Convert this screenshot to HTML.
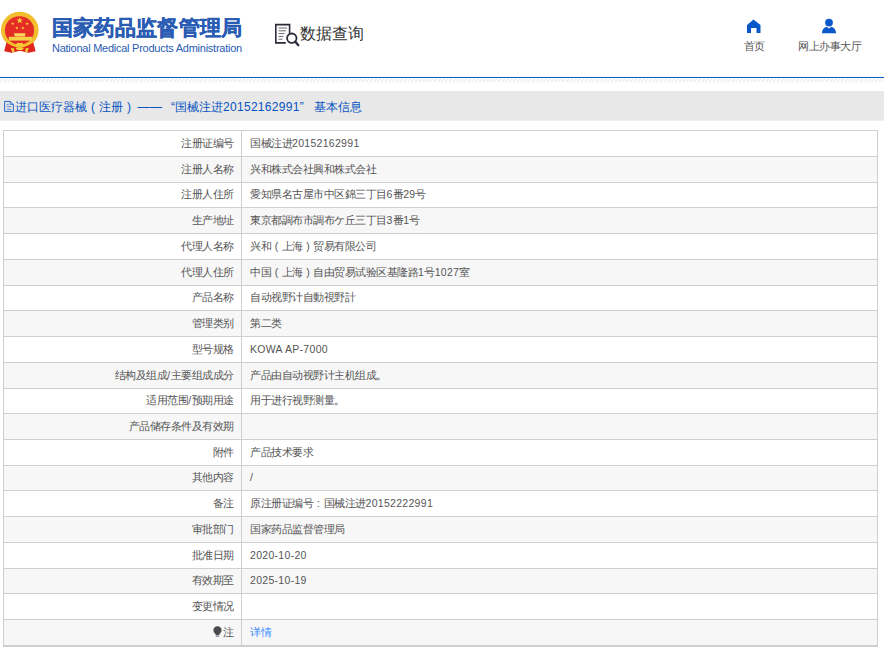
<!DOCTYPE html>
<html><head><meta charset="utf-8">
<style>
html,body{margin:0;padding:0;background:#fff;width:884px;height:653px;overflow:hidden;position:relative;font-family:"Liberation Sans",sans-serif;}
.abs{position:absolute;white-space:nowrap;}
.emblem{position:absolute;left:0;top:0;}
.title{position:absolute;left:52px;top:14px;font-size:21px;font-weight:bold;-webkit-text-stroke:0.35px #2a5cb4;color:#2a5cb4;letter-spacing:0.1px;white-space:nowrap;line-height:28px;}
.en{position:absolute;left:52px;top:41px;font-size:11px;letter-spacing:-0.25px;color:#2a5cb4;white-space:nowrap;line-height:14px;}
.dq{position:absolute;left:300px;top:21px;font-size:16px;color:#333;white-space:nowrap;line-height:26px;}
.nav{position:absolute;font-size:10.5px;letter-spacing:-0.5px;color:#555;white-space:nowrap;line-height:14px;}
.blue{position:absolute;left:0;top:77px;width:884px;height:1px;background:#0c5dbf;}
.stripes{position:absolute;left:0;top:78px;}
.bar{position:absolute;left:0;top:91px;width:884px;height:29px;background:#e8e8e8;}
.barline{position:absolute;left:0;top:120px;width:884px;height:1px;background:#eef0f8;}
.ttl{position:absolute;top:99px;font-size:12px;color:#0653c0;white-space:nowrap;line-height:16px;}
.row{position:absolute;left:3px;width:875px;}
.hl{position:absolute;left:3px;width:875px;background:#d0cfd0;}
.vl{position:absolute;width:1px;background:#d0cfd0;}
.lab{position:absolute;left:4px;width:229.5px;text-align:right;font-size:10.5px;letter-spacing:-0.5px;color:#555;white-space:nowrap;}
.val{position:absolute;left:250px;font-size:10.5px;letter-spacing:-0.5px;color:#555;white-space:nowrap;}
.link{color:#3a8cff;}
.d{letter-spacing:0.3px;}
.fp{display:inline-block;width:1em;text-align:center;}
.bulb{vertical-align:-1px;margin-right:1px;}
</style></head><body>
<svg class="emblem" width="42" height="56" viewBox="0 0 42 56">
<path d="M7 40 L32.6 40 L35.6 51.2 L28.5 52.8 L20 50.8 L11.5 52.8 L4.2 51.2 Z" fill="#e0231d"/>
<path d="M5.2 41.5 A18.8 18.2 0 1 1 34.4 41.5 Q19.8 53.5 5.2 41.5 Z" fill="#f3be2e"/>
<ellipse cx="19.5" cy="30.4" rx="14.6" ry="14.2" fill="#e42d27"/>
<path d="M19.70,17.30 L20.51,19.48 L22.84,19.58 L21.02,21.03 L21.64,23.27 L19.70,21.99 L17.76,23.27 L18.38,21.03 L16.56,19.58 L18.89,19.48Z" fill="#f6d238"/>
<path d="M12.70,22.00 L13.12,23.12 L14.32,23.17 L13.38,23.92 L13.70,25.08 L12.70,24.41 L11.70,25.08 L12.02,23.92 L11.08,23.17 L12.28,23.12Z" fill="#f6d238"/>
<path d="M27.10,22.00 L27.52,23.12 L28.72,23.17 L27.78,23.92 L28.10,25.08 L27.10,24.41 L26.10,25.08 L26.42,23.92 L25.48,23.17 L26.68,23.12Z" fill="#f6d238"/>
<path d="M16.90,26.30 L17.32,27.42 L18.52,27.47 L17.58,28.22 L17.90,29.38 L16.90,28.71 L15.90,29.38 L16.22,28.22 L15.28,27.47 L16.48,27.42Z" fill="#f6d238"/>
<path d="M22.90,26.30 L23.32,27.42 L24.52,27.47 L23.58,28.22 L23.90,29.38 L22.90,28.71 L21.90,29.38 L22.22,28.22 L21.28,27.47 L22.48,27.42Z" fill="#f6d238"/>
<path d="M13.6 33.2 L25.9 33.2 L25.2 34.2 L25.2 36.6 L14.4 36.6 L14.4 34.2 Z" fill="#f8d55a"/>
<rect x="8.8" y="36.8" width="23.2" height="3.8" fill="#f6d045"/>
<path d="M15.8 44.3 Q17.5 41.8 19.8 43.2 Q22.1 41.8 23.8 44.3 Q22 46.5 19.8 45.6 Q17.6 46.5 15.8 44.3 Z" fill="#f6cf3a"/>
<path d="M10.8 47.8 L14.2 48.6 L14.2 52.2 L12.3 52.2 Z" fill="#f3d03c"/>
<path d="M28.8 47.8 L25.4 48.6 L25.4 52.2 L27.3 52.2 Z" fill="#f3d03c"/>
<ellipse cx="19.8" cy="48.6" rx="3.8" ry="1.5" fill="#f3d03c"/>
</svg>
<div class="title">国家药品监督管理局</div>
<div class="en">National Medical Products Administration</div>
<svg class="abs" style="left:274px;top:23px" width="26" height="25" viewBox="0 0 26 25">
<path d="M15.6 11.2 V1.6 H1.8 V19.9 H11.8" fill="none" stroke="#2b2b3a" stroke-width="1.6"/>
<path d="M4.5 5h8.5M4.5 7.8h7.5M4.5 10.6h6M4.5 13.4h5M4.5 16.2h4" stroke="#6a6a72" stroke-width="1"/>
<circle cx="17.8" cy="15.2" r="4.7" fill="#fff" stroke="#2b2b3a" stroke-width="1.8"/>
<path d="M21.2 18.6 L24.3 22.2" stroke="#2b2b3a" stroke-width="2.3" stroke-linecap="round"/>
</svg>
<div class="dq">数据查询</div>
<svg class="abs" style="left:746px;top:19px" width="16" height="15" viewBox="0 0 16 15">
<path d="M7.5 0.5 L14.5 6 V14 H10.5 V9 H5 V14 H1 V6 Z" fill="#0b57c9"/>
</svg>
<div class="nav" style="left:743.5px;top:39px">首页</div>
<svg class="abs" style="left:821px;top:18px" width="16" height="16" viewBox="0 0 16 16">
<circle cx="8" cy="4.6" r="3.9" fill="#0b57c9"/>
<path d="M0.9 15.3 C1 11.5 3.3 9.3 5.6 8.7 L8 10.6 L10.4 8.7 C12.7 9.3 15 11.5 15.1 15.3 Z" fill="#0b57c9"/>
</svg>
<div class="nav" style="left:798px;top:39px">网上办事大厅</div>
<div class="blue"></div>
<svg class="stripes" width="884" height="5"><defs><pattern id="st" x="0.5" y="0" width="3.77" height="3.77" patternUnits="userSpaceOnUse"><path d="M-1 4.77 L4.77 -1" stroke="#d9d9d9" stroke-width="0.9"/></pattern></defs><rect x="0" y="1" width="884" height="3.2" fill="url(#st)"/></svg>
<div class="bar"></div>
<div class="barline"></div>
<svg class="abs" style="left:3px;top:100px" width="12" height="13" viewBox="0 0 12 13">
<path d="M1.6 1.4 H7.2 L10.4 4.6 V11.4 H1.6 Z" fill="none" stroke="#1a5fc8" stroke-width="0.95"/>
<path d="M7.2 1.4 V4.4 H10.4" fill="none" stroke="#1a5fc8" stroke-width="0.8"/>
<path d="M3.6 4.4h2.2M3.6 6.6h4.8M3.6 9.2h4.8" stroke="#4d7fd0" stroke-width="0.9"/>
</svg>
<div class="ttl" style="left:15px">进口医疗器械<span class="fp">(</span>注册<span class="fp">)</span></div><div class="ttl" style="left:137.5px;top:99px;letter-spacing:0.5px">——</div><div class="ttl" style="left:171px">“国械注进<span class="d">20152162991</span>”</div><div class="ttl" style="left:314px">基本信息</div>
<div class="row" style="top:130px;height:26px;background:#fff"></div><div class="lab" style="top:130px;height:26px;line-height:26px">注册证编号</div><div class="val" style="top:130px;height:26px;line-height:26px">国械注进<span class="d">20152162991</span></div><div class="row" style="top:156px;height:26px;background:#f7f7f7"></div><div class="lab" style="top:156px;height:26px;line-height:26px">注册人名称</div><div class="val" style="top:156px;height:26px;line-height:26px">兴和株式会社興和株式会社</div><div class="row" style="top:182px;height:25px;background:#fff"></div><div class="lab" style="top:182px;height:25px;line-height:25px">注册人住所</div><div class="val" style="top:182px;height:25px;line-height:25px">愛知県名古屋市中区錦三丁目<span class="d">6</span>番<span class="d">29</span>号</div><div class="row" style="top:207px;height:26px;background:#f7f7f7"></div><div class="lab" style="top:207px;height:26px;line-height:26px">生产地址</div><div class="val" style="top:207px;height:26px;line-height:26px">東京都調布市調布ケ丘三丁目<span class="d">3</span>番<span class="d">1</span>号</div><div class="row" style="top:233px;height:26px;background:#fff"></div><div class="lab" style="top:233px;height:26px;line-height:26px">代理人名称</div><div class="val" style="top:233px;height:26px;line-height:26px">兴和<span class="fp">(</span>上海<span class="fp">)</span>贸易有限公司</div><div class="row" style="top:259px;height:26px;background:#f7f7f7"></div><div class="lab" style="top:259px;height:26px;line-height:26px">代理人住所</div><div class="val" style="top:259px;height:26px;line-height:26px">中国<span class="fp">(</span>上海<span class="fp">)</span>自由贸易试验区基隆路<span class="d">1</span>号<span class="d">1027</span>室</div><div class="row" style="top:285px;height:25px;background:#fff"></div><div class="lab" style="top:285px;height:25px;line-height:25px">产品名称</div><div class="val" style="top:285px;height:25px;line-height:25px">自动视野计自動視野計</div><div class="row" style="top:310px;height:26px;background:#f7f7f7"></div><div class="lab" style="top:310px;height:26px;line-height:26px">管理类别</div><div class="val" style="top:310px;height:26px;line-height:26px">第二类</div><div class="row" style="top:336px;height:26px;background:#fff"></div><div class="lab" style="top:336px;height:26px;line-height:26px">型号规格</div><div class="val" style="top:336px;height:26px;line-height:26px"><span class="d">KOWA AP-7000</span></div><div class="row" style="top:362px;height:26px;background:#f7f7f7"></div><div class="lab" style="top:362px;height:26px;line-height:26px">结构及组成<span class="d">/</span>主要组成成分</div><div class="val" style="top:362px;height:26px;line-height:26px">产品由自动视野计主机组成。</div><div class="row" style="top:388px;height:25px;background:#fff"></div><div class="lab" style="top:388px;height:25px;line-height:25px">适用范围<span class="d">/</span>预期用途</div><div class="val" style="top:388px;height:25px;line-height:25px">用于进行视野测量。</div><div class="row" style="top:413px;height:26px;background:#f7f7f7"></div><div class="lab" style="top:413px;height:26px;line-height:26px">产品储存条件及有效期</div><div class="row" style="top:439px;height:26px;background:#fff"></div><div class="lab" style="top:439px;height:26px;line-height:26px">附件</div><div class="val" style="top:439px;height:26px;line-height:26px">产品技术要求</div><div class="row" style="top:465px;height:25px;background:#f7f7f7"></div><div class="lab" style="top:465px;height:25px;line-height:25px">其他内容</div><div class="val" style="top:465px;height:25px;line-height:25px"><span class="d">/</span></div><div class="row" style="top:490px;height:26px;background:#fff"></div><div class="lab" style="top:490px;height:26px;line-height:26px">备注</div><div class="val" style="top:490px;height:26px;line-height:26px">原注册证编号<span class="fp">:</span>国械注进<span class="d">20152222991</span></div><div class="row" style="top:516px;height:26px;background:#f7f7f7"></div><div class="lab" style="top:516px;height:26px;line-height:26px">审批部门</div><div class="val" style="top:516px;height:26px;line-height:26px">国家药品监督管理局</div><div class="row" style="top:542px;height:26px;background:#fff"></div><div class="lab" style="top:542px;height:26px;line-height:26px">批准日期</div><div class="val" style="top:542px;height:26px;line-height:26px"><span class="d">2020-10-20</span></div><div class="row" style="top:568px;height:25px;background:#f7f7f7"></div><div class="lab" style="top:568px;height:25px;line-height:25px">有效期至</div><div class="val" style="top:568px;height:25px;line-height:25px"><span class="d">2025-10-19</span></div><div class="row" style="top:593px;height:26px;background:#fff"></div><div class="lab" style="top:593px;height:26px;line-height:26px">变更情况</div><div class="row" style="top:619px;height:26px;background:#f7f7f7"></div><div class="lab" style="top:619px;height:26px;line-height:26px"><svg class="bulb" width="9" height="11" viewBox="0 0 9 11"><path d="M4.5 0.3C2.1 0.3 0.4 2 0.4 4.2c0 1.6 1 2.6 1.7 3.4.4.5.6 1 .6 1.6h3.6c0-.6.2-1.1.6-1.6.7-.8 1.7-1.8 1.7-3.4C8.6 2 6.9.3 4.5.3z" fill="#4a4a4a"/><rect x="2.8" y="9.6" width="3.4" height="1.2" fill="#888"/></svg>注</div><div class="val link" style="top:619px;height:26px;line-height:26px">详情</div><div class="hl" style="top:130px;height:1px"></div><div class="hl" style="top:156px;height:1px"></div><div class="hl" style="top:182px;height:1px"></div><div class="hl" style="top:207px;height:1px"></div><div class="hl" style="top:233px;height:1px"></div><div class="hl" style="top:259px;height:1px"></div><div class="hl" style="top:285px;height:1px"></div><div class="hl" style="top:310px;height:1px"></div><div class="hl" style="top:336px;height:1px"></div><div class="hl" style="top:362px;height:1px"></div><div class="hl" style="top:388px;height:1px"></div><div class="hl" style="top:413px;height:1px"></div><div class="hl" style="top:439px;height:1px"></div><div class="hl" style="top:465px;height:1px"></div><div class="hl" style="top:490px;height:1px"></div><div class="hl" style="top:516px;height:1px"></div><div class="hl" style="top:542px;height:1px"></div><div class="hl" style="top:568px;height:1px"></div><div class="hl" style="top:593px;height:1px"></div><div class="hl" style="top:619px;height:1px"></div><div class="hl" style="top:645px;height:2px"></div><div class="vl" style="left:3px;top:130px;height:517px"></div><div class="vl" style="left:241px;top:130px;height:515px"></div><div class="vl" style="left:877px;top:130px;height:517px"></div>
</body></html>
